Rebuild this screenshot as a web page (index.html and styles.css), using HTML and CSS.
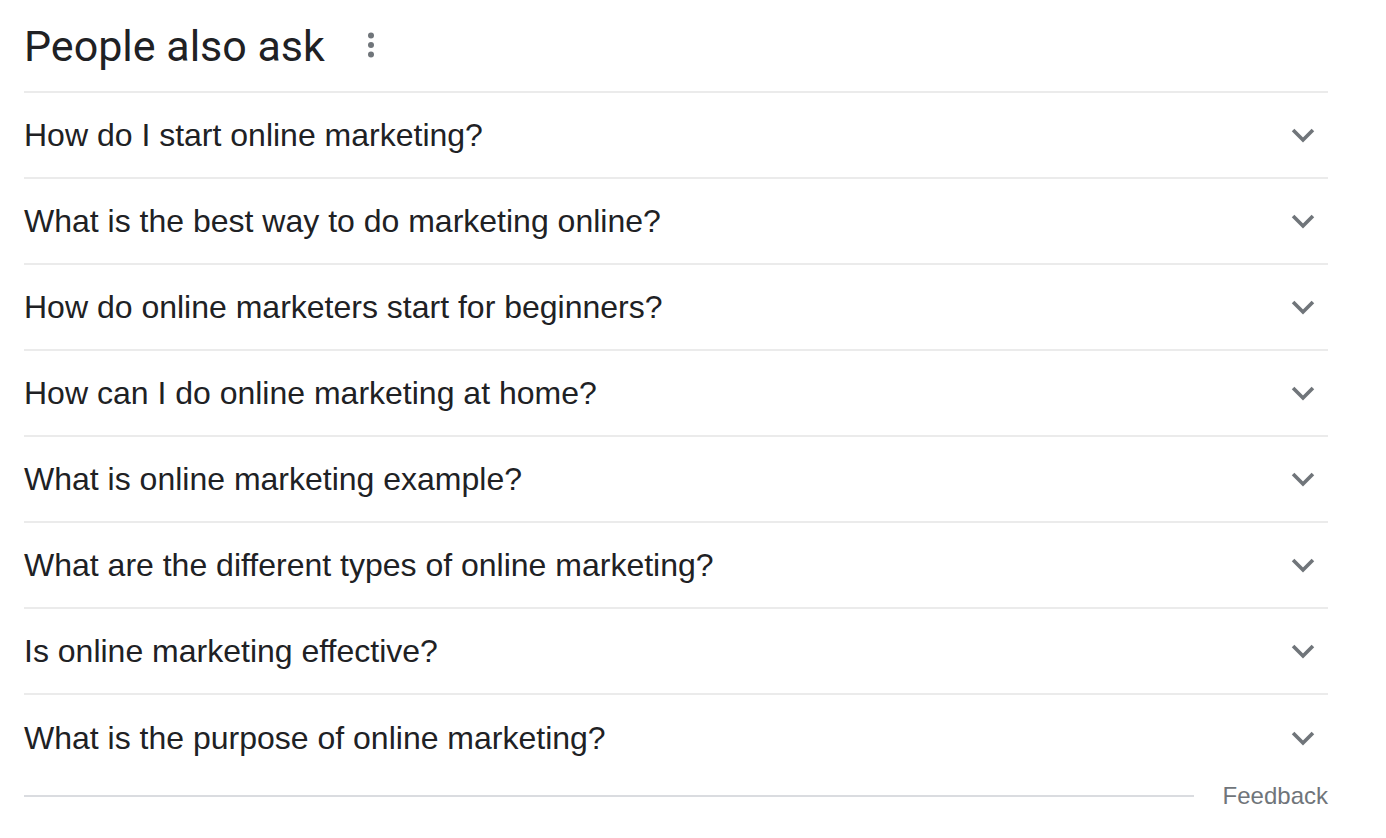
FILE: index.html
```html
<!DOCTYPE html>
<html>
<head>
<meta charset="utf-8">
<link rel="stylesheet" href="styles.css">
</head>
<body>
<div class="paa">
  <div class="head">
    <h2 class="title">People also ask</h2>
    <span class="more" aria-label="More options">
      <svg width="8" height="26" viewBox="0 0 8 26"><circle cx="4" cy="3.5" r="3"/><circle cx="4" cy="13" r="3"/><circle cx="4" cy="22.5" r="3"/></svg>
    </span>
  </div>
  <div class="list">
    <div class="row"><span class="q">How do I start online marketing?</span><svg class="chev" viewBox="0 0 24 24"><path d="M5 8.5l7 7 7-7"/></svg></div>
    <div class="row"><span class="q">What is the best way to do marketing online?</span><svg class="chev" viewBox="0 0 24 24"><path d="M5 8.5l7 7 7-7"/></svg></div>
    <div class="row"><span class="q">How do online marketers start for beginners?</span><svg class="chev" viewBox="0 0 24 24"><path d="M5 8.5l7 7 7-7"/></svg></div>
    <div class="row"><span class="q">How can I do online marketing at home?</span><svg class="chev" viewBox="0 0 24 24"><path d="M5 8.5l7 7 7-7"/></svg></div>
    <div class="row"><span class="q">What is online marketing example?</span><svg class="chev" viewBox="0 0 24 24"><path d="M5 8.5l7 7 7-7"/></svg></div>
    <div class="row"><span class="q">What are the different types of online marketing?</span><svg class="chev" viewBox="0 0 24 24"><path d="M5 8.5l7 7 7-7"/></svg></div>
    <div class="row"><span class="q">Is online marketing effective?</span><svg class="chev" viewBox="0 0 24 24"><path d="M5 8.5l7 7 7-7"/></svg></div>
    <div class="row"><span class="q">What is the purpose of online marketing?</span><svg class="chev" viewBox="0 0 24 24"><path d="M5 8.5l7 7 7-7"/></svg></div>
  </div>
  <div class="foot">
    <div class="foot-line"></div>
    <span class="feedback">Feedback</span>
  </div>
</div>
</body>
</html>
```
FILE: styles.css
```css
html, body {
  margin: 0;
  padding: 0;
  background: #fff;
}
body {
  font-family: "Liberation Sans", Arial, sans-serif;
  color: #202124;
}
.paa {
  width: 1304px;
  padding: 0 0 0 24px;
}
.head {
  height: 91px;
  display: flex;
  align-items: center;
  gap: 42px;
}
.title {
  margin: 0;
  font-family: Roboto, "Open Sans", sans-serif;
  font-weight: 400;
  font-size: 43px;
  line-height: 52px;
  color: #202124;
  padding-bottom: 0;
}
.more {
  display: flex;
  fill: #70757a;
  padding-bottom: 2px;
}
.list {
  border-top: 2px solid #ebebeb;
}
.row {
  height: 84px;
  border-bottom: 2px solid #ebebeb;
  display: flex;
  align-items: center;
  justify-content: space-between;
}
.row:last-child {
  border-bottom: none;
  height: 86px;
}
.q {
  font-size: 32px;
  line-height: 40px;
  color: #202124;
}
.chev {
  width: 34px;
  height: 34px;
  margin-right: 8px;
  fill: none;
  stroke: #70757a;
  stroke-width: 2.6;
}
.foot {
  display: flex;
  align-items: center;
  gap: 29px;
  height: 30px;
}
.foot-line {
  flex: 1;
  height: 2px;
  background: #dadce0;
}
.feedback {
  font-size: 24px;
  color: #70757a;
}
```
